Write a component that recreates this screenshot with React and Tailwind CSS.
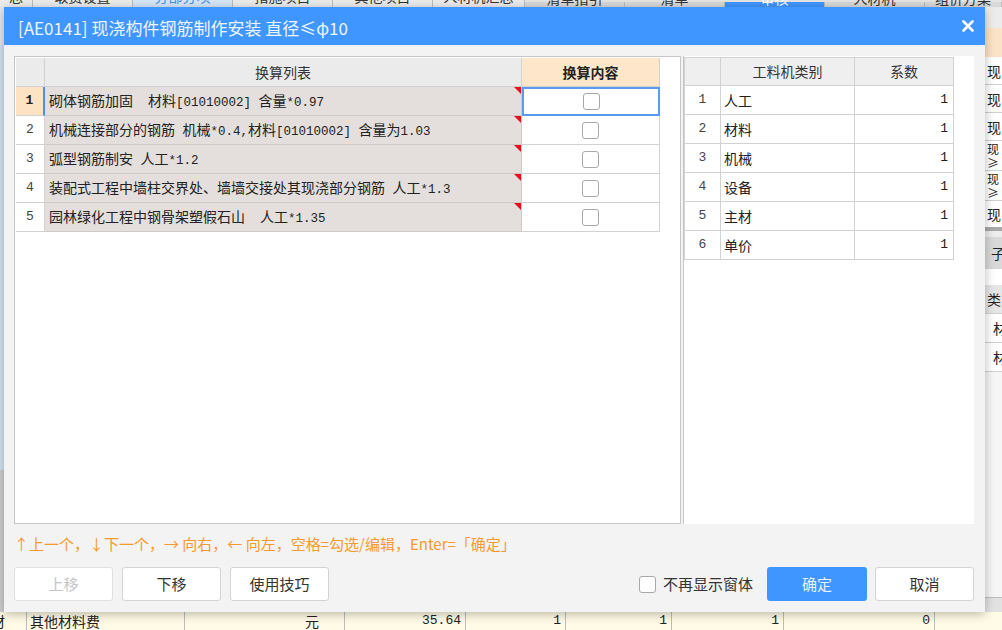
import React from "react";

const cjk = "font-['Noto_Sans_CJK_SC','Noto_Sans',sans-serif]";
const mono = "font-['Liberation_Mono','Noto_Sans_CJK_SC',monospace]";

// split CJK text and ascii runs, ascii shown in a narrow mono face
const Mixed = ({ text }) => {
  const parts = text.split(/([\x20-\x7E]+)/);
  return (
    <span className="whitespace-pre">
      {parts.map((p, i) =>
        /^[\x20-\x7E]/.test(p) ? (
          <span key={i} className={`${mono} text-[12.5px]`}>{p}</span>
        ) : (
          <span key={i}>{p}</span>
        )
      )}
    </span>
  );
};

const rules = [
  "砌体钢筋加固  材料[01010002] 含量*0.97",
  "机械连接部分的钢筋 机械*0.4,材料[01010002] 含量为1.03",
  "弧型钢筋制安 人工*1.2",
  "装配式工程中墙柱交界处、墙墙交接处其现浇部分钢筋 人工*1.3",
  "园林绿化工程中钢骨架塑假石山  人工*1.35",
];

const kinds = ["人工", "材料", "机械", "设备", "主材", "单价"];

const Box = () => (
  <span className="w-[17px] h-[17px] rounded-[3px] border border-[#a8a8a8] bg-white" />
);

const BgTabs = () => (
  <div className="flex h-[7px] overflow-hidden bg-[#e4e4e4] text-[14px] text-[#333]">
    {[
      ["w-[33px] bg-[#ececec]", "总"],
      ["w-[100px] bg-[#ececec]", "取费设置"],
      ["w-[100px] bg-[#d6e7f8] text-[#4a90e2]", "分部分项"],
      ["w-[100px] bg-[#ececec]", "措施项目"],
      ["w-[100px] bg-[#ececec]", "其他项目"],
      ["w-[92px] bg-[#ececec]", "人材机汇总"],
      ["w-[100px] bg-[#d9d9d9] mt-[2px]", "清单指引"],
      ["w-[100px] bg-[#d9d9d9] mt-[2px]", "清单"],
      ["w-[100px] bg-[#4096ff] text-white mt-[2px]", "审核"],
      ["w-[100px] bg-[#d9d9d9] mt-[2px]", "人材机"],
      ["flex-1 bg-[#d9d9d9] mt-[2px]", "组价方案"],
    ].map(([c, t], i) => (
      <div key={i} className={`${c} border-r border-[#bdbdbd] flex justify-center`}>
        <span className="-mt-[13px] leading-[18px]">{t}</span>
      </div>
    ))}
  </div>
);

const RightStrip = () => (
  <div className="w-[17px] flex flex-col overflow-hidden bg-[#f4f4f4] text-[14px] text-[#222] leading-[14px]">
    <div className="h-[21px] bg-[#ececec]" />
    <div className="h-[29px] bg-[#fbe3c8]" />
    {["现", "现", "现"].map((t, i) => (
      <div key={i} className="h-[28px] bg-white border-b border-[#cfcfcf] pl-[2px] flex items-center">{t}</div>
    ))}
    {[0, 1].map((i) => (
      <div key={i} className="h-[30px] bg-white border-b border-[#cfcfcf] pl-[2px] flex flex-col justify-center overflow-hidden text-[12px] leading-[14px]">
        <span>现</span>
        <span>≥</span>
      </div>
    ))}
    <div className="h-[26px] bg-white pl-[2px] pt-[6px] overflow-hidden">现</div>
    <div className="h-[4px] bg-[#a9a9a9]" />
    <div className="h-[6px] bg-[#ececec]" />
    <div className="h-[32px] bg-[#d9d9d9] pl-[6px] flex items-center">子</div>
    <div className="h-[16px] bg-white" />
    <div className="h-[29px] bg-[#e6e6e6] border-b border-[#cfcfcf] pl-[2px] flex items-center">类</div>
    {[0, 1].map((i) => (
      <div key={i} className="h-[29px] bg-white border-b border-[#cfcfcf] pl-[8px] flex items-center">材</div>
    ))}
    <div className="flex-1 bg-[#f6f6f6]" />
    <div className="h-[15px] bg-[#e2e2e2] border-t border-[#bdbdbd]" />
  </div>
);

const BottomRow = () => (
  <div className="flex h-[18px] bg-[#fffbe6] text-[14px] text-[#222] leading-[18px] overflow-hidden">
    <div className="w-[27px] border-r border-[#bdbdbd] overflow-hidden">
      <span className="-ml-[9px] inline-block">材</span>
    </div>
    <div className="w-[158px] border-r border-[#bdbdbd] pl-[3px]">其他材料费</div>
    <div className="w-[115px]" />
    <div className="w-[45px] border-r border-[#bdbdbd] pl-[5px]">元</div>
    {[
      ["w-[121px]", "35.64"],
      ["w-[100px]", "1"],
      ["w-[106px]", "1"],
      ["w-[112px]", "1"],
      ["w-[151px]", "0"],
    ].map(([w, v], i) => (
      <div key={i} className={`${w} border-r border-[#bdbdbd] text-right pr-[4px] ${mono} text-[13px]`}>{v}</div>
    ))}
    <div className="flex-1" />
  </div>
);

const LeftTable = () => (
  <div className="w-[667px] border border-[#c6c6c6] bg-white p-[1px]">
    <div className="grid grid-cols-[29px_477px_138px] text-[14px] text-[#222]">
      <div className="h-[29px] bg-[#ebebeb] border-r border-b border-[#d2d2d2]" />
      <div className="h-[29px] bg-[#ebebeb] border-r border-b border-[#d2d2d2] flex items-center justify-center text-[#333]">
        换算列表
      </div>
      <div className="h-[29px] bg-[#fde6c9] border-r border-b border-[#d2d2d2] flex items-center justify-center font-bold text-[#222]">
        换算内容
      </div>
      {rules.map((r, i) => (
        <React.Fragment key={i}>
          <div
            className={`h-[29px] border-b border-[#d2d2d2] flex items-center justify-center ${mono} text-[13px] ${
              i === 0
                ? "bg-[#fde2c4] font-bold border-r-2 border-r-[#4a8fe8]"
                : "bg-white border-r text-[#444]"
            }`}
          >
            {i + 1}
          </div>
          <div className="relative h-[29px] bg-[#e4dfdc] border-r border-b border-[#cfcac7] flex items-center pl-[4px]">
            <Mixed text={r} />
            <span className="absolute right-0 top-0 w-0 h-0 border-l-[7px] border-l-transparent border-t-[7px] border-t-[#e8101a]" />
          </div>
          <div
            className={`h-[29px] bg-white flex items-center justify-center ${
              i === 0 ? "border-2 border-[#5b9bef]" : "border-r border-b border-[#d2d2d2]"
            }`}
          >
            <Box />
          </div>
        </React.Fragment>
      ))}
    </div>
  </div>
);

const RightTable = () => (
  <div className="w-[291px] border-l border-[#c6c6c6] bg-white pt-[1px]">
    <div className="grid grid-cols-[36px_134px_99px] border-l border-t border-[#d2d2d2] w-[270px] text-[14px] text-[#222]">
      <div className="h-[28px] bg-[#efefef] border-r border-b border-[#d2d2d2]" />
      <div className="h-[28px] bg-[#efefef] border-r border-b border-[#d2d2d2] flex items-center justify-center text-[#333]">工料机类别</div>
      <div className="h-[28px] bg-[#efefef] border-r border-b border-[#d2d2d2] flex items-center justify-center text-[#333]">系数</div>
      {kinds.map((k, i) => (
        <React.Fragment key={k}>
          <div className={`h-[29px] border-r border-b border-[#d2d2d2] flex items-center justify-center ${mono} text-[13px] text-[#444]`}>
            {i + 1}
          </div>
          <div className="h-[29px] border-r border-b border-[#d2d2d2] flex items-center pl-[3px]">{k}</div>
          <div className={`h-[29px] border-r border-b border-[#d2d2d2] flex items-center justify-end pr-[5px] ${mono} text-[13px]`}>1</div>
        </React.Fragment>
      ))}
    </div>
  </div>
);

const Dialog = () => (
  <div className="absolute left-[4px] top-[7px] w-[981px] h-[605px] flex flex-col bg-[#f3f3f3] shadow-[0_2px_10px_rgba(0,0,0,0.28)]">
    {/* title bar */}
    <div className="h-[38px] bg-[#4096ff] flex items-center justify-between pl-[14px] pr-[11px]">
      <span className="text-[17px] text-[#eef5ff] pt-[3px]">[AE0141] 现浇构件钢筋制作安装 直径≤φ10</span>
      <svg width="12" height="12" viewBox="0 0 12 12">
        <path d="M1.5 1.5 L10.5 10.5 M10.5 1.5 L1.5 10.5" stroke="#ffffff" strokeWidth="2.6" strokeLinecap="round" />
      </svg>
    </div>

    <div className="flex flex-col flex-1 pl-[10px] pr-[11px] pt-[11px] pb-[11px]">
      <div className="flex gap-[2px] h-[468px]">
        <LeftTable />
        <RightTable />
      </div>

      <div className="mt-[10px] h-[20px] flex items-center text-[15px] text-[#f39a2c] whitespace-pre">
        ↑上一个，↓下一个，→ 向右，← 向左，空格=勾选/编辑，Enter=「确定」
      </div>

      <div className="mt-[13px] h-[34px] flex items-center gap-[9px] text-[15px]">
        <button className="w-[99px] h-[34px] rounded-[3px] border border-[#e0e0e0] bg-white text-[#c4c4c4]">上移</button>
        <button className="w-[99px] h-[34px] rounded-[3px] border border-[#d4d4d4] bg-white text-[#333]">下移</button>
        <button className="w-[99px] h-[34px] rounded-[3px] border border-[#d4d4d4] bg-white text-[#333]">使用技巧</button>
        <div className="flex-1" />
        <label className="flex items-center gap-[7px] text-[#333] mr-[5px]">
          <Box />
          不再显示窗体
        </label>
        <button className="w-[100px] h-[34px] rounded-[3px] bg-[#4096ff] text-[#eaf3ff]">确定</button>
        <button className="w-[99px] h-[34px] rounded-[3px] border border-[#d4d4d4] bg-white text-[#333] -ml-[1px]">取消</button>
      </div>
    </div>
  </div>
);

export default function App() {
  return (
    <div className={`relative w-[1002px] h-[630px] overflow-hidden bg-white ${cjk}`}>
      {/* app behind the dialog */}
      <div className="flex flex-col h-full">
        <BgTabs />
        <div className="flex flex-1 min-h-0">
          <div className="w-[4px] flex flex-col">
            <div className="h-[38px] bg-[#e8e8e8]" />
            <div className="h-[425px] bg-[#d6e4f2]" />
            <div className="flex-1 bg-[#cfcfcf]" />
          </div>
          <div className="flex-1 bg-[#f5f5f5]" />
          <RightStrip />
        </div>
        <BottomRow />
      </div>

      <Dialog />
    </div>
  );
}
